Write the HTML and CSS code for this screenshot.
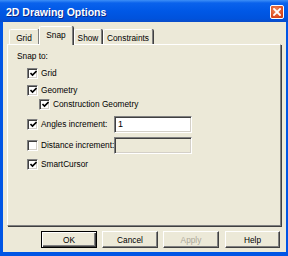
FILE: index.html
```html
<!DOCTYPE html>
<html lang="en">
<head>
    <meta charset="UTF-8">
    <title>2D Drawing Options</title>
    <link rel="stylesheet" href="styles.css">
</head>
<body>
    <div class="window">
        <div class="titlebar">
            <span class="title">2D Drawing Options</span>
            <span class="close">
                <svg width="8" height="8" viewBox="0 0 8 8"><path d="M1 1 L7 7 M7 1 L1 7" stroke="#fff" stroke-width="1.8" stroke-linecap="square"/></svg>
            </span>
        </div>

        <div class="client">
            <div class="tabs">
                <div class="tab tab-grid">Grid</div>
                <div class="tab tab-snap active">Snap</div>
                <div class="tab tab-show">Show</div>
                <div class="tab tab-cons">Constraints</div>
            </div>

            <div class="panel">
                <div class="heading">Snap to:</div>
                <div class="row lvl1"><span class="check on"><svg width="7" height="7" viewBox="0 0 7 7"><path d="M0.5 3 L2.5 5 L6.5 1" fill="none" stroke="#000" stroke-width="1.6"/></svg></span>Grid</div>
                <div class="row lvl1"><span class="check on"><svg width="7" height="7" viewBox="0 0 7 7"><path d="M0.5 3 L2.5 5 L6.5 1" fill="none" stroke="#000" stroke-width="1.6"/></svg></span>Geometry</div>
                <div class="row lvl2 tight"><span class="check on"><svg width="7" height="7" viewBox="0 0 7 7"><path d="M0.5 3 L2.5 5 L6.5 1" fill="none" stroke="#000" stroke-width="1.6"/></svg></span>Construction Geometry</div>
                <div class="row lvl1 field-row first-field"><span class="check on"><svg width="7" height="7" viewBox="0 0 7 7"><path d="M0.5 3 L2.5 5 L6.5 1" fill="none" stroke="#000" stroke-width="1.6"/></svg></span><span class="field-label">Angles increment:</span><span class="input">1</span></div>
                <div class="row lvl1 field-row"><span class="check"></span><span class="field-label">Distance increment:</span><span class="input disabled"></span></div>
                <div class="row lvl1"><span class="check on"><svg width="7" height="7" viewBox="0 0 7 7"><path d="M0.5 3 L2.5 5 L6.5 1" fill="none" stroke="#000" stroke-width="1.6"/></svg></span>SmartCursor</div>
            </div>

            <div class="buttons">
                <div class="btn default">OK</div>
                <div class="btn">Cancel</div>
                <div class="btn disabled">Apply</div>
                <div class="btn">Help</div>
            </div>
        </div>
    </div>
</body>
</html>
```

FILE: styles.css
```css
* {
    margin: 0;
    padding: 0;
    box-sizing: border-box;
}

body {
    font-family: 'Liberation Sans', Arial, sans-serif;
    font-size: 8.3px;
    color: #000;
    background: #0a4fd0;
    white-space: nowrap;
}

.window {
    width: 288px;
    height: 256px;
    display: flex;
    flex-direction: column;
    background: #0055e5;
}

/* 标题栏 */
.titlebar {
    height: 22px;
    display: flex;
    align-items: center;
    justify-content: space-between;
    padding: 0 4px 0 6px;
    background: linear-gradient(#3d8ff7 0, #0a62ec 3px, #0058e6 50%, #0052dc 85%, #0a4cc8 100%);
}

.title {
    color: #fff;
    font-weight: bold;
    font-size: 10.5px;
    text-shadow: 1px 1px 0 #0b2a8a;
    margin-top: 1px;
}

.close {
    width: 14px;
    height: 14px;
    margin-top: 1px;
    display: flex;
    align-items: center;
    justify-content: center;
    border: 1px solid #fff;
    border-radius: 2px;
    background: radial-gradient(circle at 40% 35%, #f08a5c, #d9461c 70%, #c23a14);
}

/* 主体 */
.client {
    flex: 1;
    margin: 0 2px 4px 3px;
    background: #ece9d8;
    display: flex;
    flex-direction: column;
}

.tabs {
    height: 22px;
    padding: 4px 0 0 6px;
    display: flex;
    align-items: flex-end;
    position: relative;
    z-index: 1;
}

.tab {
    height: 15px;
    display: flex;
    align-items: center;
    justify-content: center;
    background: #ece9d8;
    border-top: 1px solid #fff;
    border-left: 1px solid #fff;
    border-right: 1px solid #808080;
    box-shadow: 1px 0 0 #404040;
    border-radius: 2px 2px 0 0;
    padding-top: 1px;
}

.tab-grid { width: 30px; }
.tab-snap { width: 34px; }
.tab-show { width: 28px; margin-left: 1px; }
.tab-cons { width: 50px; margin-left: 1px; }

.tab.active {
    height: 19px;
    margin-bottom: -1px;
    padding-bottom: 3px;
}

.panel {
    height: 182px;
    margin: 0 5px 0 4px;
    border-top: 1px solid #fff;
    border-left: 1px solid #fff;
    border-right: 1px solid #808080;
    border-bottom: 1px solid #808080;
    box-shadow: 1px 1px 0 #404040;
    padding: 4px 0 0 9px;
    display: flex;
    flex-direction: column;
    gap: 3px;
}

.heading {
    height: 14px;
    line-height: 14px;
}

.row {
    height: 14px;
    display: flex;
    align-items: center;
}

.lvl1 { padding-left: 10px; }
.lvl2 { padding-left: 22px; }
.tight { margin-top: -3px; }

.field-row { height: 18px; }
.first-field { margin-top: 1px; }

.check {
    width: 11px;
    height: 11px;
    margin-right: 3px;
    background: #fff;
    border-top: 1px solid #808080;
    border-left: 1px solid #808080;
    border-right: 1px solid #fff;
    border-bottom: 1px solid #fff;
    box-shadow: inset 1px 1px 0 #404040, inset -1px -1px 0 #d4d0c8;
    display: flex;
    align-items: center;
    justify-content: center;
    flex-shrink: 0;
}

.check svg {
    margin: 1px 0 0 1px;
}

.field-label {
    width: 73px;
    flex-shrink: 0;
}

.input {
    width: 78px;
    height: 17px;
    flex-shrink: 0;
    background: #fff;
    border-top: 1px solid #808080;
    border-left: 1px solid #808080;
    border-right: 1px solid #fff;
    border-bottom: 1px solid #fff;
    box-shadow: inset 1px 1px 0 #404040, inset -1px -1px 0 #d4d0c8;
    padding: 2px 0 0 3px;
    font-size: 9px;
}

.input.disabled {
    background: #ece9d8;
}

/* 按钮 */
.buttons {
    margin-top: 5px;
    padding-right: 6px;
    display: flex;
    justify-content: flex-end;
    gap: 5px;
}

.btn {
    width: 56px;
    height: 17px;
    display: flex;
    align-items: center;
    justify-content: center;
    background: #ece9d8;
    border-top: 1px solid #fff;
    border-left: 1px solid #fff;
    border-right: 1px solid #404040;
    border-bottom: 1px solid #404040;
    box-shadow: inset -1px -1px 0 #808080;
}

.btn:last-child {
    width: 55px;
    margin-left: 1px;
}

.btn.default {
    border: 1px solid #000;
    box-shadow: inset 1px 1px 0 #fff, inset -1px -1px 0 #404040, inset -2px -2px 0 #808080;
}

.btn.disabled {
    color: #aca899;
}
```
